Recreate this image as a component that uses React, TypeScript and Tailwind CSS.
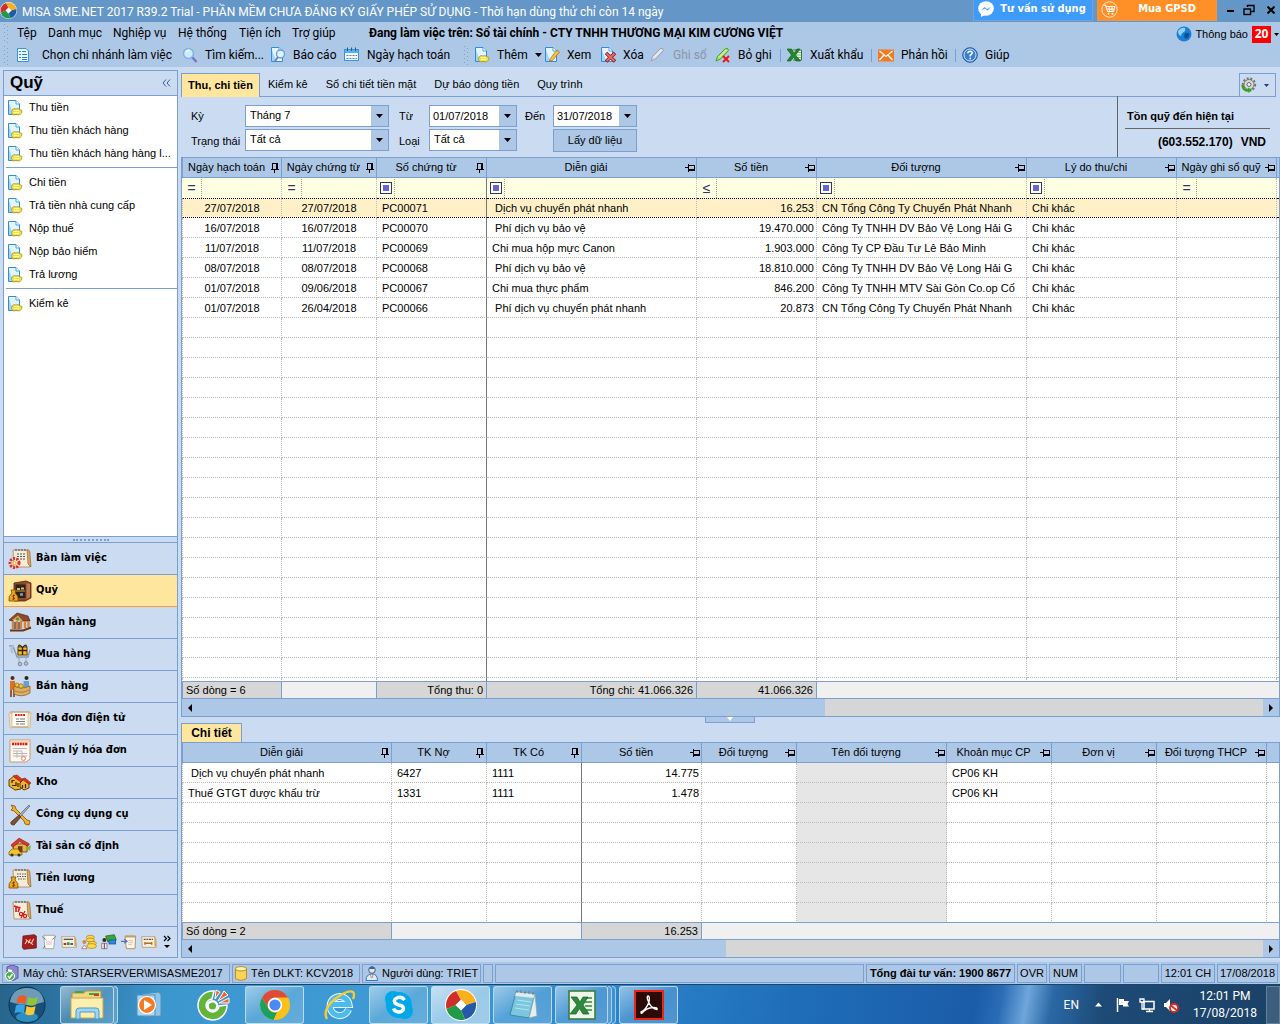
import type { ReactNode } from 'react'
import clsx from 'clsx'

/* ---------- small shared icons ---------- */

const MisaLogo = ({ size }: { size: number }) => (
    <svg width={size} height={size} viewBox="0 0 32 32" className="shrink-0">
        <circle cx="16" cy="16" r="16" fill="#fff" />
        <path d="M11 2 A15 15 0 0 1 30.800 13 L21 16 L16 11 Z" fill="#f9b01c" />
        <path d="M30.800 13 A15 15 0 0 1 20 30.500 L16 21 L21 16 Z" fill="#2458a8" />
        <path d="M20 30.500 A15 15 0 0 1 1.500 20 L11 16 L16 21 Z" fill="#1f9a45" />
        <path d="M1.500 20 A15 15 0 0 1 11 2 L16 11 L11 16 Z" fill="#cf2f2a" />
        <path d="M16 10.500 L21.500 16 L16 21.500 L10.500 16 Z" fill="#fff" />
    </svg>
)

const DocBase = ({ children }: { children?: ReactNode }) => (
    <svg width="16" height="16" viewBox="0 0 16 16" className="shrink-0">
        <path d="M1.500 .5 H9 L12.500 4 V14.500 H1.500 Z" fill="#e2f4ff" stroke="#2f8fd6" />
        <path d="M9 .5 V4 H12.500" fill="#fff" stroke="#2f8fd6" strokeWidth=".8" />
        <path d="M2 3 L6 14 H2 Z" fill="#9fd3f7" />
        {children}
    </svg>
)

const AddDocIcon = () => (
    <DocBase>
        <path d="M5 10 L7 8.500 L9 9 L11 8.500 L12.500 9.500 L15 10.500 L14.500 13 L12.500 15 L9 14.500 L6 15 L4.500 12.500 Z" fill="#f3e04a" stroke="#a89a1c" strokeWidth=".8" />
        <path d="M7 10.500 H12 M7 12.500 H12" stroke="#fff9b0" />
    </DocBase>
)

const ViewIcon = () => (
    <DocBase>
        <path d="M6 12 L13 3 L15.500 5 L8.500 13.500 L5.500 14 Z" fill="#f9c23c" stroke="#a0690e" strokeWidth=".7" />
    </DocBase>
)

const DeleteIcon = () => (
    <DocBase>
        <path d="M6 6 L15 14.500 M15 6 L6 14.500" stroke="#8e1c1c" strokeWidth="3.600" />
        <path d="M6.500 6.500 L14.500 14 M14.500 6.500 L6.500 14" stroke="#e46a64" strokeWidth="2" />
    </DocBase>
)

const ReportIcon = () => (
    <DocBase>
        <circle cx="10.500" cy="7" r="4" fill="#dff2ff" stroke="#6d9fd4" strokeWidth="1.400" />
        <path d="M8 10 L5 14" stroke="#7f77c4" strokeWidth="2" />
    </DocBase>
)

const ListIcon = () => (
    <svg width="16" height="16" viewBox="0 0 16 16" className="shrink-0">
        <path d="M1.500 1.500 H10 L12.500 4 V14.500 H1.500 Z" fill="#e9f6ff" stroke="#3b93d8" />
        <path d="M3 4.500 H5 M3 7.500 H5 M3 10.500 H5 M6 4.500 H10 M6 7.500 H11 M6 10.500 H11 M6 12.500 H11" stroke="#2f83c9" />
    </svg>
)

const SearchIcon = () => (
    <svg width="16" height="16" viewBox="0 0 16 16" className="shrink-0">
        <circle cx="6.500" cy="6.500" r="5" fill="#cfeaff" stroke="#7fb2e2" strokeWidth="1.500" />
        <path d="M4 5 Q5 3 7.500 3.500" stroke="#fff" strokeWidth="1.300" fill="none" />
        <path d="M10.500 10.500 L14.500 15" stroke="#7a74c6" strokeWidth="2.400" />
    </svg>
)

const CalendarIcon = () => (
    <svg width="16" height="16" viewBox="0 0 16 16" className="shrink-0">
        <rect x=".5" y="2.500" width="14" height="11" fill="#f2faff" stroke="#3b93d8" />
        <rect x="1" y="3" width="13" height="3" fill="#58b1ee" />
        <path d="M3.500 .5 V4 M7.500 .5 V4 M11.500 .5 V4" stroke="#24598c" />
        <path d="M2.500 8.500 H13 M2.500 11.500 H13" stroke="#4b88bd" strokeDasharray="2 1" />
    </svg>
)

const PencilIcon = ({ active }: { active?: boolean }) => (
    <svg width="16" height="16" viewBox="0 0 16 16" className="shrink-0">
        <path
            d="M1 14 L2.500 9.500 L10.500 1.500 Q13 .5 13.500 3.500 L5.500 12 Z"
            fill={active ? '#a6e36a' : '#d8dbe0'}
            stroke={active ? '#4f9e1e' : '#9aa2ad'}
        />
        <path d="M4 10.500 L11.500 3" stroke="#fff" strokeWidth=".8" />
        {active && <path d="M8 9 L14 15 M14 9 L8 15" stroke="#ee1111" strokeWidth="1.800" />}
    </svg>
)

const ExcelIcon = () => (
    <svg width="16" height="16" viewBox="0 0 16 16" className="shrink-0">
        <path d="M6 3 H14.500 V13 H6" fill="#e8f5e6" stroke="#2f7d32" />
        <path d="M9 5.500 H14 M9 8 H14 M9 10.500 H14" stroke="#7dbb7d" />
        <path d="M0 2 H4.500 L7 6 L10 2 H13 L8.500 8 L13.500 14 H9 L6.500 10.500 L3.500 14 H0 L4.500 8 Z" fill="#1f8a2d" stroke="#0d5218" strokeWidth=".6" />
    </svg>
)

const MailIcon = () => (
    <svg width="16" height="16" viewBox="0 0 16 16" className="shrink-0">
        <rect y="2.500" width="16" height="12" fill="#f47a20" />
        <path d="M1.500 4 L8 9.500 L14.500 4 M1.500 13 L6 8 M14.500 13 L10 8" stroke="#fff" strokeWidth="1.300" fill="none" />
    </svg>
)

const HelpIcon = () => (
    <svg width="16" height="16" viewBox="0 0 16 16" className="shrink-0">
        <circle cx="8" cy="8" r="7.300" fill="#3a80d2" stroke="#1f5aa5" />
        <circle cx="8" cy="8" r="6" fill="none" stroke="#cfe3fa" />
        <path d="M5.800 6.300 Q6 4.200 8.100 4.200 Q10.300 4.300 10.200 6.200 Q10 7.400 8.200 8.200 V9.500 M8.200 10.700 V12.200" stroke="#fff" strokeWidth="1.500" fill="none" />
    </svg>
)

const GlobeIcon = () => (
    <svg width="16" height="16" viewBox="0 0 16 16" className="shrink-0">
        <circle cx="8" cy="8" r="7.500" fill="#1c7fd6" />
        <path d="M2 5 Q5 1 9 2 Q10 5 7 6.500 Q5 7 5 10 Q2 9 2 5Z" fill="#8fd2ff" />
        <path d="M9 7 Q12 6 13.500 8 Q13 12 10 13 Q7 11 9 7Z" fill="#0b4f9c" />
    </svg>
)

const GearIcon = () => (
    <svg width="16" height="16" viewBox="0 0 16 16">
        <circle cx="8" cy="7.500" r="6" fill="none" stroke="#777" strokeWidth="2.400" strokeDasharray="2 1.600" />
        <circle cx="8" cy="7.500" r="5" fill="#d9d9d9" stroke="#777" />
        <circle cx="8" cy="7.500" r="2" fill="#f5f5f5" stroke="#666" />
        <path d="M1.500 8 Q2 14 8 13.500" stroke="#2fa51e" strokeWidth="2.400" fill="none" />
        <path d="M7 10.500 L11 13 L7.500 16 Z" fill="#2fa51e" />
    </svg>
)

const Caret = () => (
    <svg width="7" height="4" viewBox="0 0 7 4" className="shrink-0">
        <path d="M0 0 H7 L3.500 4 Z" fill="currentColor" />
    </svg>
)

/* Column pin: upright when the column is frozen, on its side otherwise */
const Pin = ({ fixed }: { fixed?: boolean }) => (
    <svg width="10" height="10" viewBox="0 0 10 10" className="mr-px shrink-0" shapeRendering="crispEdges">
        <g transform={fixed ? undefined : 'rotate(90 5 5)'}>
            <path d="M2.500 6 V.5 H6.500 V6 M1 6.500 H9 M4.500 7 V10" stroke="#000" fill="none" />
            <path d="M6 .5 H7.500 V6" stroke="#000" fill="none" />
        </g>
    </svg>
)

/* ---------- navigation pictures ---------- */

const Scroll = ({ children }: { children?: ReactNode }) => (
    <>
        <path d="M5 3 H20 L22 20 H6 Z" fill="#f4ecd8" stroke="#a98252" strokeWidth=".8" />
        <path d="M19 3 Q22 2 22 7 L23 20 L20 17 Z" fill="#d9a35c" stroke="#8a5f2c" strokeWidth=".6" />
        <path d="M8 4 V2 M11 4 V2 M14 4 V2 M17 4 V2" stroke="#444" />
        {children}
    </>
)

const MoneyBag = ({ x, y }: { x: number; y: number }) => (
    <g transform={`translate(${x} ${y})`}>
        <path d="M3 3 L2 0 H7 L6 3 Q10 6 9 11 H0 Q-1 6 3 3Z" fill="#f2a71b" stroke="#7a4a08" strokeWidth=".8" />
        <path d="M6 5.500 H4 Q3 6.500 4.500 7.200 Q6.500 8 5.500 9 H3 M4.500 4.500 V10" stroke="#5c3200" strokeWidth=".7" fill="none" />
    </g>
)

const House = ({ x, y, s = 1 }: { x: number; y: number; s?: number }) => (
    <g transform={`translate(${x} ${y}) scale(${s})`}>
        <path d="M2 6 H14 V13 H2 Z" fill="#eeb04c" stroke="#7d4a12" strokeWidth=".8" />
        <path d="M0 7 L7 1 L16 6 L14.500 8 L7.500 4 L1.500 9 Z" fill="#dc3b22" stroke="#8e1a0c" strokeWidth=".6" />
        <rect x="6" y="8" width="4" height="5" fill="#6b3d12" />
    </g>
)

const navArt: Record<string, ReactNode> = {
    desk: (
        <Scroll>
            <path d="M9 7 H18 M9 9.500 H17 M9 12 H18" stroke="#555" strokeDasharray="2 1" />
            <circle cx="6.500" cy="16" r="4.500" fill="none" stroke="#e12d1c" strokeWidth="3" strokeDasharray="2 1.200" />
            <circle cx="6.500" cy="16" r="2" fill="#ffb21c" />
            <circle cx="6.500" cy="16" r=".9" fill="#fff" />
        </Scroll>
    ),
    fund: (
        <>
            <path d="M6 4 L18 2 L23 4 V19 L17 22 H6 Z" fill="#8d4a2b" stroke="#4f2512" strokeWidth=".8" />
            <rect x="7.500" y="5.500" width="10" height="13.500" fill="#2d211b" />
            <path d="M18.500 4 L22 5 V18 L18.500 20 Z" fill="#c07650" />
            <path d="M8 12 H17" stroke="#c0a060" />
            <path d="M9 10 H12 M13 9.500 H16" stroke="#d9bd5a" strokeWidth="2" />
            <path d="M12 15.500 H15" stroke="#8f9aa0" strokeWidth="2.500" />
            <MoneyBag x={1} y={11} />
        </>
    ),
    bank: (
        <>
            <path d="M1 9 L9 2 L20 5 L22 10 H14 L10 5.500 L4 10 Z" fill="#8d4a2b" stroke="#4f2512" strokeWidth=".7" />
            <path d="M4 9 L10 4.500 L15 10 Z" fill="#e2a04c" />
            <circle cx="9.500" cy="8" r="1.500" fill="#3a9b3a" />
            <path d="M5 10 V18 M9 10 V18 M13 10 V18 M17 10 V17 M20.500 10 V16" stroke="#d68340" strokeWidth="2.400" />
            <path d="M2 19.500 H15 L23 16.500" stroke="#6a3517" strokeWidth="2" fill="none" />
            <path d="M7 11 V18 M11 11 V18" stroke="#2a160b" />
        </>
    ),
    buy: (
        <>
            <path d="M1 3 H5 L9 14 H20 L22 7" fill="none" stroke="#8b9ab0" strokeWidth="1.500" />
            <path d="M8 11 H21 M9 15 L20 14 M11 15 V20 M18 14 V20" stroke="#97a6ba" />
            <path d="M5 3 Q2 7 5 10" stroke="#b5c2d4" strokeWidth="2.500" fill="none" />
            <rect x="10" y="4" width="9" height="8" fill="#f7bd20" stroke="#6b4400" />
            <path d="M14.500 4 V12 M10 7.500 H19" stroke="#35240a" strokeWidth="1.400" />
            <path d="M14 4 Q10 0 11 4 M15 4 Q19 0 18 4" stroke="#35240a" strokeWidth="1.200" fill="none" />
            <circle cx="12" cy="21" r="1.800" fill="#b5c0ce" stroke="#7d8a9c" />
            <circle cx="18" cy="20.500" r="1.800" fill="#b5c0ce" stroke="#7d8a9c" />
        </>
    ),
    sell: (
        <>
            <circle cx="4.500" cy="3" r="2" fill="#5a2b12" />
            <path d="M2 6 H7 V15 H2 Z" fill="#e2701c" />
            <path d="M3 15 V22 M6 15 V22" stroke="#7a3510" strokeWidth="1.500" />
            <circle cx="18.500" cy="3" r="2" fill="#32231a" />
            <path d="M15.500 6 H21 V13 H15.500 Z" fill="#6d9fce" />
            <path d="M6 11 Q13 15 22 11 V18 Q14 23 6 19 Z" fill="#dcae63" stroke="#8a6428" strokeWidth=".8" />
            <circle cx="9" cy="10" r="2" fill="#f7c52c" stroke="#7d5506" strokeWidth=".6" />
            <circle cx="13" cy="11" r="2.200" fill="#f7c52c" stroke="#7d5506" strokeWidth=".6" />
            <path d="M7 16 Q14 19 21 15" stroke="#a87c36" fill="none" />
        </>
    ),
    einvoice: (
        <>
            <path d="M3 5 H21 V20 H3 Z" fill="#fffdf8" stroke="#cda978" strokeWidth="1.500" />
            <path d="M1 6 H4 V21 H2 Z M20 6 H23 L22 21 H20 Z" fill="#f2e1c4" stroke="#cda978" strokeWidth=".6" />
            <path d="M7 8 H17" stroke="#e02020" strokeWidth="1.800" strokeDasharray="2 .7" />
            <path d="M8 12 H11 M12 12 H17 M8 14.500 H17 M8 17 H11 M12 17 H17" stroke="#777" />
        </>
    ),
    invoice: (
        <>
            <path d="M2 1 H22 V20 L18 23 H2 Z" fill="#fffaf2" stroke="#c89a68" />
            <rect x="2.500" y="1.500" width="19" height="2.500" fill="#f3d9b4" />
            <path d="M4 5 H20" stroke="#e01818" strokeWidth="2.600" strokeDasharray="2 .6" />
            <path d="M5 9.500 H19 M5 12 H14 M5 14.500 H19 M5 17 H19 M9 12 V19 M14 12 V19" stroke="#bdb6b6" />
            <circle cx="15.500" cy="19.500" r="2" fill="none" stroke="#e58080" />
        </>
    ),
    stock: (
        <>
            <path d="M1 9 L6 5 L13 9 V18 L7 19 L1 15 Z" fill="#efb42c" stroke="#4a2f05" strokeWidth=".9" />
            <path d="M12 12 L16 8 L21 12 V17 L16 19 L12 16 Z" fill="#efb42c" stroke="#4a2f05" strokeWidth=".9" />
            <path d="M5 5 L9 4 L15 9 L13 11 L7 7 Z" fill="#dc2f1c" stroke="#8e1a0c" strokeWidth=".6" />
            <path d="M14 8 L17 7 L23 12 L21 13.500 L16 9.500 Z" fill="#dc2f1c" stroke="#8e1a0c" strokeWidth=".6" />
            <path d="M4 12 V9.500 H6.500 M4 14.500 H8 V11 M10 12 V16 M14.500 14 V17 M17.500 13 V17" stroke="#3b2503" strokeWidth="1.200" fill="none" />
        </>
    ),
    tools: (
        <>
            <path d="M3 2 L7 3 L8 6 L19 17 L22 18 L21 22 L17 21 L16 18 L6 8 L3 7 L5 5 Z" fill="#f3ae2a" stroke="#82520b" strokeWidth=".8" />
            <path d="M21 2 L22 3 L12 14 L10.500 12.500 Z" fill="#a9b1bb" stroke="#565e68" strokeWidth=".7" />
            <path d="M11 12 L13 14 L6 22 Q2 22 3 19 Z" fill="#7a5230" stroke="#40270f" strokeWidth=".7" />
        </>
    ),
    asset: (
        <>
            <House x={3} y={2} s={1.15} />
            <path d="M18 13 L23 10 L22 16 Z" fill="#6fbf3a" />
            <path d="M1 17 L4 14 H10 L12 17 L14 17.500 V20 H1 Z" fill="#f4c526" stroke="#7a5a06" strokeWidth=".7" />
            <circle cx="4" cy="20" r="1.600" fill="#333" />
            <circle cx="11" cy="20" r="1.600" fill="#333" />
        </>
    ),
    salary: (
        <Scroll>
            <path d="M9 7 H18 M9 9.500 H18 M10 12 H18" stroke="#555" strokeDasharray="1.500 1" />
            <MoneyBag x={1} y={10} />
        </Scroll>
    ),
    tax: (
        <Scroll>
            <path d="M6 7 L12 9 M8 7 V13 M12 8 L10 13" stroke="#e01818" strokeWidth="1.600" />
            <circle cx="13" cy="15" r="1.600" fill="none" stroke="#e01818" strokeWidth="1.200" />
            <circle cx="17" cy="17" r="1.600" fill="none" stroke="#e01818" strokeWidth="1.200" />
            <path d="M17 12 L13 19" stroke="#e01818" strokeWidth="1.300" />
        </Scroll>
    ),
    book: (
        <>
            <path d="M3 3 L20 1 L23 3 V21 L4 23 L2 20 Z" fill="#a81c1c" stroke="#5a0b0b" />
            <path d="M6 15 L9 10 M11 14 L14 8 M16 13 L19 7 M7 8 L18 16" stroke="#ffd9c4" strokeWidth="1.600" />
        </>
    ),
    ledger: (
        <>
            <path d="M4 2 H21 L19 22 H6 Z" fill="#fbfbf4" stroke="#8b8b7a" />
            <path d="M2 4 L8 9 M22 4 L16 9 M6 18 L3 22" stroke="#222" strokeDasharray="2 1" />
            <path d="M8 12 H17 M8 15 H17" stroke="#c66ac0" strokeDasharray="2 1" />
        </>
    ),
    chart: (
        <>
            <path d="M1 4 H21 L23 20 H2 Z" fill="#f8efdc" stroke="#b18a5c" />
            <path d="M20 4 L23 8 V20 L20 17 Z" fill="#d9a35c" />
            <path d="M4 8 H18" stroke="#555" strokeWidth="2" />
            <path d="M4 15 H8" stroke="#e02020" strokeWidth="3" />
            <path d="M9 14.500 H13" stroke="#2a9e2a" strokeWidth="4" />
            <path d="M14 15 H18" stroke="#2a60c8" strokeWidth="3" />
        </>
    ),
    coins: (
        <>
            <ellipse cx="14" cy="5" rx="6" ry="3" fill="#ffd84a" stroke="#a87808" />
            <ellipse cx="14" cy="9" rx="6" ry="3" fill="#ffd84a" stroke="#a87808" />
            <ellipse cx="17" cy="14" rx="6" ry="3" fill="#ffd84a" stroke="#a87808" />
            <ellipse cx="16" cy="18" rx="7" ry="3.500" fill="#ffd84a" stroke="#a87808" />
            <circle cx="5" cy="12" r="3" fill="#c98a5a" />
            <path d="M1 22 Q5 13 9 22 Z" fill="#fff" stroke="#b04a3a" />
        </>
    ),
    cash: (
        <>
            <path d="M7 3 L20 1 L23 9 L10 12 Z" fill="#3ba53b" stroke="#155a15" />
            <rect x="12" y="9" width="10" height="6" fill="#2d8ae0" stroke="#104a88" />
            <circle cx="5" cy="9" r="3" fill="#3b2a1c" />
            <path d="M1 22 V14 H9 V22 Z" fill="#e8eef6" stroke="#54657a" />
            <path d="M5 14 V22" stroke="#b02020" strokeWidth="1.500" />
        </>
    ),
    note: (
        <>
            <path d="M6 3 H22 L21 22 H8 Z" fill="#fdf6e6" stroke="#b18a5c" strokeWidth="1.400" />
            <path d="M6 4 H21" stroke="#c99a5c" strokeWidth="2.400" />
            <path d="M11 10 H18 M11 13 H18 M11 16 H16" stroke="#b9aa92" />
            <path d="M0 11 H8 M5 8 L9 11 L5 14" stroke="#5b6fb5" strokeWidth="2" fill="none" />
        </>
    ),
    link: (
        <>
            <path d="M1 4 H21 L23 20 H2 Z" fill="#f8efdc" stroke="#b18a5c" />
            <path d="M20 4 L23 8 V20 L20 17 Z" fill="#d9a35c" />
            <path d="M4 8 H18" stroke="#555" strokeWidth="2" strokeDasharray="3 1" />
            <path d="M5 14 H17 M6 12 V16 M16 12 V16" stroke="#a8702a" strokeWidth="2.200" />
        </>
    ),
}

const NavArt = ({ name, size = 24 }: { name: string; size?: number }) => (
    <svg width={size} height={size} viewBox="0 0 24 24" className="shrink-0">
        {navArt[name]}
    </svg>
)

/* ---------- data ---------- */

const menus = [
    { label: 'Tệp', width: 'w-[31px]' },
    { label: 'Danh mục', width: 'w-[65px]' },
    { label: 'Nghiệp vụ', width: 'w-[65px]' },
    { label: 'Hệ thống', width: 'w-[61px]' },
    { label: 'Tiện ích', width: 'w-[53px]' },
    { label: 'Trợ giúp', width: 'w-[77px]' },
]

const taskGroups = [
    ['Thu tiền', 'Thu tiền khách hàng', 'Thu tiền khách hàng hàng l...'],
    ['Chi tiền', 'Trả tiền nhà cung cấp', 'Nộp thuế', 'Nộp bảo hiểm', 'Trả lương'],
    ['Kiểm kê'],
]

const modules = [
    { art: 'desk', label: 'Bàn làm việc' },
    { art: 'fund', label: 'Quỹ', active: true },
    { art: 'bank', label: 'Ngân hàng' },
    { art: 'buy', label: 'Mua hàng' },
    { art: 'sell', label: 'Bán hàng' },
    { art: 'einvoice', label: 'Hóa đơn điện tử' },
    { art: 'invoice', label: 'Quản lý hóa đơn' },
    { art: 'stock', label: 'Kho' },
    { art: 'tools', label: 'Công cụ dụng cụ' },
    { art: 'asset', label: 'Tài sản cố định' },
    { art: 'salary', label: 'Tiền lương' },
    { art: 'tax', label: 'Thuế' },
]

const tabs = ['Thu, chi tiền', 'Kiểm kê', 'Sổ chi tiết tiền mặt', 'Dự báo dòng tiền', 'Quy trình']

type Column = {
    label: string
    width: string
    fixed?: boolean
    split?: boolean
    align?: string
    op?: string
    muted?: boolean
}

const voucherColumns: Column[] = [
    { label: 'Ngày hạch toán', width: 'w-[100px]', fixed: true, align: 'text-center', op: '=' },
    { label: 'Ngày chứng từ', width: 'w-[95px]', fixed: true, align: 'text-center', op: '=' },
    { label: 'Số chứng từ', width: 'w-[110px]', fixed: true, split: true, op: 'box' },
    { label: 'Diễn giải', width: 'w-[210px]', op: 'box' },
    { label: 'Số tiền', width: 'w-[120px]', align: 'text-right', op: '≤' },
    { label: 'Đối tượng', width: 'w-[210px]', op: 'box' },
    { label: 'Lý do thu/chi', width: 'w-[150px]', op: 'box' },
    { label: 'Ngày ghi sổ quỹ', width: 'w-[100px]', op: '=' },
]

const vouchers = [
    ['27/07/2018', '27/07/2018', 'PC00071', ' Dịch vụ chuyển phát nhanh', '16.253', 'CN Tổng Công Ty Chuyển Phát Nhanh', 'Chi khác', ''],
    ['16/07/2018', '16/07/2018', 'PC00070', ' Phí dịch vụ bảo vệ', '19.470.000', 'Công Ty TNHH DV Bảo Vệ Long Hải G', 'Chi khác', ''],
    ['11/07/2018', '11/07/2018', 'PC00069', 'Chi mua hộp mực Canon', '1.903.000', 'Công Ty CP Đầu Tư Lê Bảo Minh', 'Chi khác', ''],
    ['08/07/2018', '08/07/2018', 'PC00068', ' Phí dịch vụ bảo vệ', '18.810.000', 'Công Ty TNHH DV Bảo Vệ Long Hải G', 'Chi khác', ''],
    ['01/07/2018', '09/06/2018', 'PC00067', 'Chi mua thực phẩm', '846.200', 'Công Ty TNHH MTV Sài Gòn Co.op Cố', 'Chi khác', ''],
    ['01/07/2018', '26/04/2018', 'PC00066', ' Phí dịch vụ chuyển phát nhanh', '20.873', 'CN Tổng Công Ty Chuyển Phát Nhanh', 'Chi khác', ''],
]

const detailColumns: Column[] = [
    { label: 'Diễn giải', width: 'w-[210px]', fixed: true },
    { label: 'TK Nợ', width: 'w-[95px]', fixed: true },
    { label: 'TK Có', width: 'w-[95px]', fixed: true, split: true },
    { label: 'Số tiền', width: 'w-[120px]', align: 'text-right' },
    { label: 'Đối tượng', width: 'w-[95px]' },
    { label: 'Tên đối tượng', width: 'w-[150px]', muted: true },
    { label: 'Khoản mục CP', width: 'w-[105px]' },
    { label: 'Đơn vị', width: 'w-[105px]' },
    { label: 'Đối tượng THCP', width: 'w-[110px]' },
]

const details = [
    [' Dịch vụ chuyển phát nhanh', '6427', '1111', '14.775', '', '', 'CP06 KH', '', ''],
    ['Thuế GTGT được khấu trừ', '1331', '1111', '1.478', '', '', 'CP06 KH', '', ''],
]

/* ---------- building blocks ---------- */

const Grip = () => (
    <svg width="6" height="20" className="shrink-0">
        <path d="M1.500 1 V20 M4.500 3 V20" stroke="#86a0c4" strokeDasharray="1 3" />
    </svg>
)

const ToolButton = ({ icon, label, width, wide, disabled, caret }: {
    icon: ReactNode
    label: string
    width: string
    wide?: boolean
    disabled?: boolean
    caret?: boolean
}) => (
    <button disabled={disabled} className={clsx('flex items-center whitespace-nowrap', width, wide ? 'gap-[10px]' : 'gap-[7px]', disabled && 'text-[#8a95a5]')}>
        {icon}
        <span>{label}</span>
        {caret && <Caret />}
    </button>
)

const Separator = () => <span className="mr-[6px] h-[13px] w-px shrink-0 bg-[#7aa0d0]" />

const Combo = ({ id, value, width }: { id: string; value: string; width: string }) => (
    <div className={clsx('flex h-[22px] border border-[#7ba0cf] bg-white', width)}>
        <select id={id} className="min-w-0 flex-1 appearance-none bg-white px-1 pb-0.5 outline-none">
            <option>{value}</option>
        </select>
        <span className="flex w-[17px] items-center justify-center bg-[#adc7e6]">
            <Caret />
        </span>
    </div>
)

const DateBox = ({ id, value, width }: { id: string; value: string; width: string }) => (
    <div className={clsx('flex h-[22px] border border-[#7ba0cf] bg-white', width)}>
        <input id={id} defaultValue={value} className="min-w-0 flex-1 bg-white px-[3px] outline-none" />
        <button type="button" aria-label="Chọn ngày" className="flex w-[17px] items-center justify-center bg-[#adc7e6]">
            <Caret />
        </button>
    </div>
)

const Operator = ({ op }: { op: string }) => (
    <div className={clsx('flex h-[19px] items-center border-r border-dotted border-[#999]', op === 'box' ? 'w-[18px] pl-[3px]' : 'w-5 justify-center')}>
        {op === 'box' ? (
            <span className="flex size-3 items-center justify-center border border-[#33336b] bg-white">
                <span className="size-[6px] bg-[#6666cc]" />
            </span>
        ) : (
            <span className="text-sm leading-none text-[#33336b]">{op}</span>
        )}
    </div>
)

const DataTable = ({ columns, rows, blank, filter, selected }: {
    columns: Column[]
    rows: string[][]
    blank: number
    filter?: boolean
    selected?: number
}) => (
    <table className="w-full table-fixed border-separate border-spacing-0">
        <thead>
            <tr>
                {columns.map((c) => (
                    <th key={c.label} className={clsx('h-5 border-r border-b border-[#7ba0cf] bg-[#adc7e6] p-0 font-normal first:border-l', c.width)}>
                        <div className="flex items-center">
                            <span className="flex-1 whitespace-nowrap text-center">{c.label}</span>
                            <Pin fixed={c.fixed} />
                        </div>
                    </th>
                ))}
                <th className="border-b border-[#7ba0cf] bg-[#adc7e6] p-0" />
            </tr>
        </thead>
        <tbody>
            {filter && (
                <tr className="bg-[#ffffe1]">
                    {columns.map((c) => (
                        <td key={c.label} className={clsx('h-5 border-r p-0', c.split ? 'border-[#777]' : 'border-dotted border-[#bbb]')}>
                            <Operator op={c.op ?? '='} />
                        </td>
                    ))}
                    <td />
                </tr>
            )}
            {rows.map((row, r) => (
                <tr key={r} className={r === selected ? 'bg-[#fff0c8]' : 'bg-white'}>
                    {row.map((cell, i) => (
                        <td
                            key={i}
                            className={clsx(
                                'h-5 overflow-hidden border-b whitespace-pre first:border-l first:border-l-[#bbb]',
                                columns[i].align === 'text-center' ? 'text-center' : columns[i].align === 'text-right' ? 'pr-0.5 text-right' : 'pl-[5px]',
                                columns[i].split ? 'border-r border-r-[#777] [border-style:dotted_solid_dotted_dotted]' : 'border-r border-dotted border-r-[#bbb]',
                                columns[i].muted && 'bg-[#e6e6e6]',
                                r === selected ? 'border-t border-t-black border-b-black' : 'border-b-[#bbb] pt-0.5',
                            )}
                        >
                            {cell}
                        </td>
                    ))}
                    <td className={clsx('border-b border-dotted', r === selected ? 'border-t border-black' : 'border-[#bbb]')} />
                </tr>
            ))}
            {Array.from({ length: blank }, (_, r) => (
                <tr key={r}>
                    {columns.map((c) => (
                        <td
                            key={c.label}
                            className={clsx(
                                'h-5 border-b border-b-[#bbb] p-0 first:border-l first:border-l-[#bbb]',
                                c.split ? 'border-r border-r-[#777] [border-style:dotted_solid_dotted_dotted]' : 'border-r border-dotted border-r-[#bbb]',
                                c.muted && 'bg-[#e6e6e6]',
                            )}
                        />
                    ))}
                    <td className="border-b border-dotted border-[#bbb] p-0" />
                </tr>
            ))}
        </tbody>
    </table>
)

const Sum = ({ width, children, empty, left }: { width: string; children?: ReactNode; empty?: boolean; left?: boolean }) => (
    <div className={clsx('shrink-0 border-r border-[#7ba0cf] px-[3px]', width, empty ? 'bg-[#f0f0f0]' : 'bg-[#d6d6d6]', left ? 'text-left' : 'text-right')}>
        {children}
    </div>
)

const ScrollBar = ({ thumb }: { thumb: string }) => (
    <div className="flex h-[18px] shrink-0 border-t border-[#7ba0cf] bg-[#d6d6d6]">
        <button aria-label="Cuộn trái" className="flex w-4 items-center justify-center bg-[#adc7e6]">
            <svg width="4" height="8"><path d="M4 0 V8 L0 4 Z" /></svg>
        </button>
        <div className={clsx('bg-[#adc7e6]', thumb)} />
        <button aria-label="Cuộn phải" className="ml-auto flex w-4 items-center justify-center bg-[#adc7e6]">
            <svg width="4" height="8"><path d="M0 0 V8 L4 4 Z" /></svg>
        </button>
    </div>
)

const StatusCell = ({ width, children }: { width: string; children?: ReactNode }) => (
    <div className={clsx('flex h-[19px] items-center gap-1 border border-[#7ba0cf] whitespace-nowrap', width)}>
        {children}
    </div>
)

/* ---------- page parts ---------- */

const TitleBar = () => (
    <header className="flex h-[22px] shrink-0 bg-[#6496c8] text-white">
        <div className="flex items-center pb-0.5">
            <MisaLogo size={17} />
        </div>
        <h1 className="ml-[5px] mt-px whitespace-nowrap font-[Roboto,sans-serif] text-[12px] leading-[22px]">
            MISA SME.NET 2017 R39.2 Trial - PHẦN MỀM CHƯA ĐĂNG KÝ GIẤY PHÉP SỬ DỤNG - Thời hạn dùng thử chỉ còn 14 ngày
        </h1>
        <div className="ml-auto flex shrink-0 items-start gap-1 font-['DejaVu_Sans_Condensed','DejaVu_Sans',sans-serif] text-[11px] font-bold">
            <button className="flex h-[21px] w-[120px] items-center border border-t-0 border-[#7ba0cf] bg-[#3d9bfc] pb-0.5 pl-1">
                <svg width="16" height="16" viewBox="0 0 16 16">
                    <ellipse cx="8" cy="7.500" rx="7.800" ry="7.300" fill="#fff" />
                    <path d="M3 12 V16 L7 14 Z" fill="#fff" />
                    <path d="M3 9.500 L6.500 6 L9 8 L13 6 L9.500 9.500 L7 7.600 Z" fill="#3d9bfc" />
                </svg>
                <span className="flex-1 whitespace-nowrap">Tư vấn sử dụng</span>
            </button>
            <button className="flex h-[21px] w-[120px] items-center border border-t-0 border-[#e39a50] bg-[#ff8f26] pb-0.5 pl-[3px]">
                <svg width="17" height="17" viewBox="0 0 17 17">
                    <circle cx="8.500" cy="8.500" r="7.700" fill="none" stroke="#fff" strokeWidth=".8" />
                    <path d="M2.500 4 H4.500 L6.500 10.500 H12.500 L14 5.500 H5 M6 8 H13.500 M8 5.500 L8.500 10.500 M11 5.500 V10.500" stroke="#fff" fill="none" />
                    <circle cx="7.500" cy="12.700" r="1" fill="#fff" />
                    <circle cx="11.500" cy="12.700" r="1" fill="#fff" />
                </svg>
                <span className="flex-1">Mua GPSD</span>
            </button>
            <div className="flex h-5 items-center gap-2 pr-[5px] pl-1">
                <button aria-label="Thu nhỏ">
                    <svg width="10" height="12"><path d="M2 7 H9" stroke="#000" strokeWidth="2" /></svg>
                </button>
                <button aria-label="Khôi phục">
                    <svg width="12" height="12" fill="none" stroke="#000">
                        <path d="M4.500 3 V1.500 H11 V7.500 H8" strokeWidth="1.400" />
                        <rect x="1" y="5" width="6.500" height="5.500" strokeWidth="1.400" />
                    </svg>
                </button>
                <button aria-label="Đóng" className="ml-1">
                    <svg width="8" height="8"><path d="M.5 .5 L7.500 7.500 M7.500 .5 L.5 7.500" stroke="#000" strokeWidth="2" /></svg>
                </button>
            </div>
        </div>
    </header>
)

const MenuBars = () => (
    <nav className="flex h-[45px] shrink-0 flex-col bg-[#adc7e6] font-[Roboto,sans-serif] text-[12px]">
        <div className="flex h-[22px] items-center pl-[3px]">
            <Grip />
            <div className="ml-2 flex">
                {menus.map((m) => (
                    <button key={m.label} className={clsx('whitespace-nowrap text-left', m.width)}>{m.label}</button>
                ))}
            </div>
            <strong className="whitespace-nowrap">Đang làm việc trên: Sổ tài chính - CTY TNHH THƯƠNG MẠI KIM CƯƠNG VIỆT</strong>
            <button className="ml-auto flex items-center gap-[3px] pt-0.5 pr-px font-['Liberation_Sans',sans-serif] text-[11px]">
                <GlobeIcon />
                <span>Thông báo</span>
                <span className="ml-px flex h-[17px] w-[19px] items-center justify-center bg-[#f00] font-['Open_Sans',sans-serif] text-[12px] font-bold text-white">20</span>
                <svg width="5" height="3"><path d="M0 0 H5 L2.500 3 Z" /></svg>
            </button>
        </div>
        <div className="flex h-[22px] items-center pl-[3px]">
            <Grip />
            <div className="ml-[7px] flex items-center">
                <ToolButton icon={<ListIcon />} label="Chọn chi nhánh làm việc" width="w-[166px]" wide />
                <ToolButton icon={<SearchIcon />} label="Tìm kiếm..." width="w-[88px]" />
                <ToolButton icon={<ReportIcon />} label="Báo cáo" width="w-[74px]" />
                <ToolButton icon={<CalendarIcon />} label="Ngày hạch toán" width="w-[119px]" />
                <Grip />
                <span className="w-[5px]" />
                <ToolButton icon={<AddDocIcon />} label="Thêm" width="w-[70px]" caret />
                <ToolButton icon={<ViewIcon />} label="Xem" width="w-[56px]" />
                <ToolButton icon={<DeleteIcon />} label="Xóa" width="w-[50px]" />
                <ToolButton icon={<PencilIcon />} label="Ghi sổ" width="w-[65px]" disabled />
                <ToolButton icon={<PencilIcon active />} label="Bỏ ghi" width="w-[65px]" />
                <Separator />
                <ToolButton icon={<ExcelIcon />} label="Xuất khẩu" width="w-[84px]" />
                <Separator />
                <ToolButton icon={<MailIcon />} label="Phản hồi" width="w-[77px]" />
                <Separator />
                <ToolButton icon={<HelpIcon />} label="Giúp" width="w-[50px]" />
            </div>
        </div>
    </nav>
)

const Sidebar = () => (
    <aside className="flex w-[175px] shrink-0 flex-col border border-[#7ba0cf]">
        <div className="flex h-[25px] shrink-0 items-center justify-between border-b border-[#7ba0cf] px-1.5">
            <h2 className="text-[17px] font-bold">Quỹ</h2>
            <button aria-label="Thu gọn">
                <svg width="9" height="8" fill="none" stroke="#3a5f9e"><path d="M4 .5 L1 4 L4 7.500 M8 .5 L5 4 L8 7.500" /></svg>
            </button>
        </div>
        <div className="min-h-0 flex-1 overflow-hidden bg-white">
            {taskGroups.map((group, g) => (
                <ul key={g} className={clsx(g > 0 && 'mt-0.5 ml-0.5 border-t border-[#7ba0cf] pt-[3px]')}>
                    {group.map((task) => (
                        <li key={task}>
                            <a href="#" className={clsx('flex h-[23px] items-center gap-1.5 whitespace-nowrap', g > 0 ? 'pl-px' : 'pl-[3px]')}>
                                <AddDocIcon />
                                {task}
                            </a>
                        </li>
                    ))}
                </ul>
            ))}
        </div>
        <div className="flex h-[6px] shrink-0 items-center justify-center border-t border-[#7ba0cf]">
            <span className="w-9 border-t-2 border-dotted border-[#7ba0cf]" />
        </div>
        <div className="shrink-0 border-t border-[#7ba0cf] font-['DejaVu_Sans_Condensed','DejaVu_Sans',sans-serif] text-[11px] font-bold">
            {modules.map((m) => (
                <button
                    key={m.label}
                    className={clsx('flex h-8 w-full items-center gap-1 border-b pl-1', m.active ? 'border-[#ff9a3c] bg-[#ffe69f]' : 'border-[#7ba0cf]')}
                >
                    <NavArt name={m.art} />
                    {m.label}
                </button>
            ))}
        </div>
        <div className="flex h-[30px] shrink-0 items-center gap-1 pl-[17px]">
            {['book', 'ledger', 'chart', 'coins', 'cash', 'note', 'link'].map((name) => (
                <button key={name} aria-label={name}>
                    <NavArt name={name} size={16} />
                </button>
            ))}
            <button aria-label="Thêm mục" className="ml-0.5">
                <svg width="8" height="14" fill="none" stroke="#000">
                    <path d="M1 1 L3.500 3.500 L1 6 M4.500 1 L7 3.500 L4.500 6" strokeWidth="1.200" />
                    <path d="M1 10 H7 L4 13 Z" fill="#000" stroke="none" />
                </svg>
            </button>
        </div>
    </aside>
)

const FilterPanel = () => (
    <div className="flex h-[61px] shrink-0">
        <form className="grid auto-rows-[24px] grid-cols-[54px_154px_30px_96px_28px_84px] pt-[9px] pl-[10px]">
            <label htmlFor="period" className="leading-[22px]">Kỳ</label>
            <Combo id="period" value="Tháng 7" width="w-[144px]" />
            <label htmlFor="from" className="leading-[22px]">Từ</label>
            <DateBox id="from" value="01/07/2018" width="w-[88px]" />
            <label htmlFor="to" className="leading-[22px]">Đến</label>
            <DateBox id="to" value="31/07/2018" width="w-[84px]" />
            <label htmlFor="state" className="leading-6">Trạng thái</label>
            <Combo id="state" value="Tất cả" width="w-[144px]" />
            <label htmlFor="kind" className="leading-6">Loại</label>
            <Combo id="kind" value="Tất cả" width="w-[88px]" />
            <button type="button" className="col-start-6 h-[23px] border border-[#7ba0cf] bg-[#adc7e6]">Lấy dữ liệu</button>
        </form>
        <div className="ml-auto w-[163px] border-l border-[#666] pt-2 pr-[10px] pl-[7px] font-bold">
            <p className="border-b border-[#666] pl-0.5 leading-[24px]">Tồn quỹ đến hiện tại</p>
            <p className="flex justify-end gap-2 pr-1 text-[12px] leading-[26px]">
                <span>(603.552.170)</span>
                <span>VND</span>
            </p>
        </div>
    </div>
)

const MainArea = () => (
    <main className="flex min-w-0 flex-1 flex-col">
        <div className="mt-1.5 -mb-px flex h-[24px] shrink-0 items-stretch pr-1">
            {tabs.map((tab, i) => (
                <button
                    key={tab}
                    className={clsx('whitespace-nowrap', i === 0 ? 'w-[79px] border border-b-0 border-[#7ba0cf] bg-[#ffe69f] font-bold' : 'border-b border-[#7ba0cf] pr-[10px] pl-2')}
                >
                    {tab}
                </button>
            ))}
            <div className="flex-1 border-b border-[#7ba0cf]" />
            <button aria-label="Tùy chọn" className="flex w-[37px] items-center gap-[7px] border border-[#7ba0cf] pl-px text-[#1d3f8f]">
                <GearIcon />
                <svg width="5" height="3"><path d="M0 0 H5 L2.500 3 Z" fill="currentColor" /></svg>
            </button>
        </div>
        <FilterPanel />
        <section className="flex min-h-0 flex-1 flex-col border border-[#7ba0cf] bg-white">
            <div className="min-h-0 flex-1 overflow-hidden">
                <DataTable columns={voucherColumns} rows={vouchers} blank={19} filter selected={0} />
            </div>
            <div className="flex h-[17px] shrink-0 border-t border-l border-[#7ba0cf] bg-[#f0f0f0] leading-4">
                <Sum width="w-[99px]" left>Số dòng = 6</Sum>
                <Sum width="w-[95px]" empty />
                <Sum width="w-[110px]">Tổng thu: 0</Sum>
                <Sum width="w-[210px]">Tổng chi: 41.066.326</Sum>
                <Sum width="w-[120px]">41.066.326</Sum>
            </div>
            <ScrollBar thumb="w-[627px]" />
        </section>
        <div className="flex h-1.5 shrink-0 justify-center pr-0.5">
            <button aria-label="Ẩn chi tiết" className="flex w-[50px] justify-center border border-t-0 border-[#7ba0cf] bg-[#adc7e6]">
                <svg width="6" height="4"><path d="M0 0 H6 L3 4 Z" fill="#fff" /></svg>
            </button>
        </div>
        <div className="flex h-[19px] shrink-0">
            <button className="w-[61px] border border-b-0 border-[#7ba0cf] bg-[#ffe69f] text-[12px] leading-4 font-bold">Chi tiết</button>
        </div>
        <section className="flex shrink-0 flex-col border border-[#7ba0cf] bg-white">
            <div className="h-[179px] overflow-hidden">
                <DataTable columns={detailColumns} rows={details} blank={6} />
            </div>
            <div className="flex h-[17px] shrink-0 border-t border-l border-[#7ba0cf] bg-[#f0f0f0] leading-4">
                <Sum width="w-[209px]" left>Số dòng = 2</Sum>
                <Sum width="w-[190px]" empty />
                <Sum width="w-[120px]">16.253</Sum>
            </div>
            <ScrollBar thumb="w-[528px]" />
        </section>
    </main>
)

const StatusBar = () => (
    <footer className="flex h-6 shrink-0 items-center gap-[2px] border-t-2 border-[#c3d7f0] bg-[#adc7e6] px-0.5">
        <StatusCell width="w-[228px] pl-0.5">
            <svg width="14" height="16" viewBox="0 0 14 16" className="shrink-0">
                <path d="M2 2 L7 0 L13 2 V13 L7 16 L2 14 Z" fill="#8d86d0" stroke="#5d56a0" />
                <path d="M3 4 L7 5 V7 L3 6Z" fill="#fff" />
                <circle cx="5" cy="11" r="4.500" fill="#43b649" stroke="#fff" />
                <path d="M3 11 L4.500 13 L7.500 9" stroke="#fff" strokeWidth="1.500" fill="none" />
            </svg>
            Máy chủ: STARSERVER\MISASME2017
        </StatusCell>
        <StatusCell width="w-[128px] pl-0.5">
            <svg width="12" height="15" viewBox="0 0 12 15" className="shrink-0">
                <path d="M.5 2.500 V12.500 Q6 16 11.500 12.500 V2.500 Z" fill="#f8d35a" stroke="#c58f14" />
                <ellipse cx="6" cy="2.800" rx="5.500" ry="2.200" fill="#fff2b8" stroke="#c58f14" />
            </svg>
            Tên DLKT: KCV2018
        </StatusCell>
        <StatusCell width="w-[119px] pl-0.5">
            <svg width="13" height="15" viewBox="0 0 13 15" className="shrink-0">
                <circle cx="7" cy="4" r="3.300" fill="#fde3bd" stroke="#2b62ae" />
                <path d="M4 3 Q7 -2 10 3 Z" fill="#2b62ae" />
                <path d="M1 14.500 Q1 8 7 8 Q12.500 8 12.500 14.500 Z" fill="#d7e9fb" stroke="#2f7ac6" />
                <path d="M5 9 L7 12 L8 9" stroke="#f08a1c" fill="none" />
            </svg>
            Người dùng: TRIET
        </StatusCell>
        <StatusCell width="w-[10px]" />
        <StatusCell width="min-w-0 flex-1" />
        <StatusCell width="w-[149px] justify-center"><b>Tổng đài tư vấn: 1900 8677</b></StatusCell>
        <StatusCell width="w-[30px] justify-center">OVR</StatusCell>
        <StatusCell width="w-[33px] justify-center">NUM</StatusCell>
        <StatusCell width="w-[37px]" />
        <StatusCell width="w-[36px]" />
        <StatusCell width="w-[54px] justify-center">12:01 CH</StatusCell>
        <StatusCell width="w-[61px] justify-center">17/08/2018</StatusCell>
    </footer>
)

const TaskButton = ({ label, open, bright, width, children }: { label: string; open?: boolean; bright?: boolean; width: string; children: ReactNode }) => (
    <button
        aria-label={label}
        className={clsx(
            'flex h-[38px] items-center justify-center',
            width,
            open && 'rounded-[3px] border border-[#c9e4f5]/80 bg-linear-to-br from-white/50 via-white/15 to-white/20',
            bright && 'bg-white/40',
        )}
    >
        {children}
    </button>
)

const TaskBar = () => (
    <div className="flex h-10 shrink-0 items-center border-t border-[#1c4560] bg-[linear-gradient(100deg,#27648a_0%,#2d78a8_6%,#3d97cf_13%,#3f9bd6_35%,#2b84cc_48%,#1f6db9_62%,#1b5ca8_76%,#2a6cb6_78%,#6fa6da_80%,#2a68a6_82%,#1d4a76_86%,#1b4166_100%)]">
        <button aria-label="Start" className="mr-[13px] ml-[7px]">
            <svg width="40" height="38" viewBox="0 0 40 38">
                <circle cx="20" cy="19" r="18" fill="#174f76" stroke="#0c3552" />
                <path d="M3 16 Q5 2 20 2 Q35 2 37 16 Q20 22 3 16Z" fill="#8fb4cc" opacity=".75" />
                <ellipse cx="20" cy="31" rx="11" ry="5" fill="#37a9de" opacity=".7" />
                <path d="M11 11 Q15 8 19.500 10.500 L18.500 18 Q14 15.500 9.500 18 Z" fill="#ee5a24" />
                <path d="M21 11 Q25.500 13.500 31 11 L29 18.500 Q24.500 21 19.800 18.500 Z" fill="#8cc63f" />
                <path d="M9 19.500 Q13.500 17 18 19.500 L17 27.500 Q12 25 7.500 27.500 Z" fill="#35a5e5" />
                <path d="M19.500 20 Q24 22.500 28.600 20 L27 28 Q22.500 30.500 18.300 28 Z" fill="#fdc82f" />
            </svg>
        </button>
        <TaskButton label="Explorer" width="w-[54px]" open>
            <svg width="34" height="30" viewBox="0 0 34 30">
                <path d="M2 3 H14 L16 1 H31 V27 H2 Z" fill="#f1d77c" stroke="#b8943a" />
                <path d="M5 2 H13 M19 4 H29" stroke="#35a853" strokeWidth="2" />
                <path d="M24 5 H29" stroke="#d23b2b" strokeWidth="2" />
                <path d="M1 8 H33 V28 H1 Z" fill="#fbeeae" stroke="#c9a74e" />
                <path d="M6 29 V21 Q6 18 9 18 H26 Q29 18 29 21 V29 H25 V22 H10 V29 Z" fill="#9fd4f2" stroke="#4d9cc9" />
            </svg>
        </TaskButton>
        <span className="h-[38px] w-1 rounded-r border-y border-r border-[#c9e4f5]/80 bg-white/20" />
        <TaskButton label="Media Player" width="w-[46px] ml-2" >
            <svg width="28" height="28" viewBox="0 0 28 28">
                <path d="M7 3 L24 1 L26 4 V25 L9 26 Z" fill="#8fc4e6" stroke="#4d90bd" />
                <rect x="2" y="4" width="18" height="21" fill="#aed6f0" stroke="#4d90bd" />
                <circle cx="12" cy="14" r="8.500" fill="#f47b20" stroke="#fff" strokeWidth="1.200" />
                <path d="M9 9 L17 14 L9 19 Z" fill="#fff" />
            </svg>
        </TaskButton>
        <TaskButton label="Cốc Cốc" width="w-[64px] ml-[9px]">
            <svg width="34" height="34" viewBox="0 0 34 34">
                <path d="M18 3 A14.500 14.500 0 1 0 31 17 L23 18 A6.500 6.500 0 1 1 16 11 Z" fill="#62b53a" stroke="#fff" strokeWidth="1.500" />
                <circle cx="16.500" cy="18" r="6" fill="#fff" />
                <circle cx="16.500" cy="18" r="3.600" fill="#62b53a" />
                <path d="M19 11 L20 2 L24 4 Z M22 13 L28 3 L32 7 Z M23 15 L33 10 L33 15 Z" fill="#f4672a" stroke="#fff" />
            </svg>
        </TaskButton>
        <TaskButton label="Chrome" width="w-[59px] mr-1" open>
            <svg width="30" height="30" viewBox="0 0 30 30">
                <circle cx="15" cy="15" r="15" fill="#fbc116" />
                <path d="M2 7.500 A15 15 0 0 1 28 7.500 H15 A7.500 7.500 0 0 0 8.500 18.700 Z" fill="#de4a3c" />
                <path d="M2 7.500 L8.500 18.700 A7.500 7.500 0 0 0 17 22.200 L13.500 29.900 A15 15 0 0 1 2 7.500 Z" fill="#1ba15f" />
                <circle cx="15" cy="15" r="7.200" fill="#fff" />
                <circle cx="15" cy="15" r="5.600" fill="#4a8af4" />
            </svg>
        </TaskButton>
        <TaskButton label="Internet Explorer" width="w-[61px]">
            <svg width="32" height="32" viewBox="0 0 32 32">
                <path d="M25.500 20.500 A9.500 9.500 0 1 1 26 15.500 H9" fill="none" stroke="#eaf8ff" strokeWidth="7" />
                <path d="M25.500 20.500 A9.500 9.500 0 1 1 26 15.500 H9" fill="none" stroke="#4cbcf0" strokeWidth="5" />
                <path d="M4 30 Q-1 21 12 10 Q25 0 30 3 Q32 5 30 10" fill="none" stroke="#f8cc2e" strokeWidth="2.400" />
            </svg>
        </TaskButton>
        <TaskButton label="Skype" width="w-[59px] mr-[3px]" open>
            <svg width="30" height="30" viewBox="0 0 30 30">
                <circle cx="15" cy="15" r="13" fill="#00a8e8" />
                <circle cx="9" cy="9" r="8" fill="#00a8e8" />
                <circle cx="21" cy="21" r="8" fill="#00a8e8" />
                <path d="M20.500 10 Q18 6.500 14 7.500 Q9.500 9 10.500 12 Q11 14 15 15 Q20 16 19.500 19 Q18 22.500 14 22 Q10.500 21.500 9.500 18.500" fill="none" stroke="#fff" strokeWidth="3.400" />
            </svg>
        </TaskButton>
        <TaskButton label="MISA" width="w-[59px] mr-[3px]" open bright>
            <MisaLogo size={32} />
        </TaskButton>
        <TaskButton label="Notepad" width="w-[59px] mr-[3px]" open>
            <svg width="32" height="32" viewBox="0 0 32 32">
                <path d="M9 3 L28 5 L22 29 L3 26 Z" fill="#7cc7de" stroke="#3e8ba6" />
                <path d="M9 3 L28 5 L27 9 L8 7 Z" fill="#dfe9ee" />
                <path d="M10 11 L24 13 M9 15 L23 17 M8 19 L22 21" stroke="#b5e5f2" />
                <path d="M28 5 L30 27 L22 29 Z" fill="#e8eef0" stroke="#8fa3ab" strokeWidth=".7" />
                <path d="M10 4 V1 M14 4 V1 M18 5 V2 M22 5 V2 M26 6 V3" stroke="#777" />
            </svg>
        </TaskButton>
        <TaskButton label="Excel" width="w-[53px]" open>
            <svg width="28" height="30" viewBox="0 0 28 30">
                <rect x="1" y="1" width="26" height="28" fill="#eef6ec" stroke="#3c7d3e" strokeWidth="1.600" />
                <path d="M17 8 H24 M17 12 H24 M17 16 H24 M17 20 H24" stroke="#5fa562" strokeWidth="2" />
                <path d="M3 7 H9 L12 12 L15 7 H20 L15 15 L21 24 H15 L11.500 18.500 L8 24 H2 L9 15 Z" fill="#2c8a3a" stroke="#155c22" strokeWidth=".7" />
            </svg>
        </TaskButton>
        <span className="h-[38px] w-1 rounded-r border-y border-r border-[#c9e4f5]/70 bg-white/20" />
        <span className="mr-[3px] h-[38px] w-1 rounded-r border-y border-r border-[#c9e4f5]/70 bg-white/10" />
        <TaskButton label="Adobe Reader" width="w-[59px]" open>
            <svg width="30" height="30" viewBox="0 0 30 30">
                <rect x="1" y="1" width="28" height="28" fill="#2b0a08" stroke="#ee2312" strokeWidth="2" />
                <path d="M7 22 Q12 20 15 12 Q16 6 14 6 Q12 7 15 13 Q18 19 23 19.500 Q24 17.500 19 17.500 Q12 18 8 23 Q7 24 7 22Z" fill="none" stroke="#fff" strokeWidth="1.400" />
            </svg>
        </TaskButton>
        <div className="ml-auto flex items-center font-[Roboto,sans-serif] text-white">
            <span className="text-[12px]">EN</span>
            <svg width="8" height="5" className="ml-4"><path d="M0 4.500 H7 L3.500 .5 Z" fill="#fff" /></svg>
            <svg width="16" height="16" viewBox="0 0 16 16" className="ml-3">
                <path d="M2.500 1 V15" stroke="#fff" strokeWidth="1.500" />
                <path d="M4 2 H9 V4 H14 L12.500 7 L14 9.500 H8 V8 H4 Z" fill="#fff" />
            </svg>
            <svg width="16" height="16" viewBox="0 0 16 16" fill="none" stroke="#fff" className="ml-2">
                <rect x="5" y="4.500" width="10" height="7.500" strokeWidth="1.500" />
                <path d="M7 14.500 H14 M10.500 12 V14 M1 2 H5 V5 H1 Z M3 5 V12 H5" strokeWidth="1.300" />
            </svg>
            <svg width="16" height="16" viewBox="0 0 16 16" className="ml-2">
                <path d="M1 6 H3 L7 2 V14 L3 10 H1 Z" fill="#fff" />
                <circle cx="11" cy="11" r="4" fill="#fff" stroke="#e02a1c" strokeWidth="1.800" />
                <path d="M8 8.500 L14 13.500" stroke="#e02a1c" strokeWidth="1.800" />
            </svg>
            <div className="ml-[14px] w-[64px] text-center text-[12px] leading-[17px]">
                <p>12:01 PM</p>
                <p>17/08/2018</p>
            </div>
            <button aria-label="Desktop" className="ml-[9px] h-[38px] w-[14px] border border-[#7f9ab0]/60 bg-white/15" />
        </div>
    </div>
)

export default function App() {
    return (
        <div className="flex h-screen flex-col overflow-hidden bg-[#cbdcf2] font-['Liberation_Sans',sans-serif] text-[11px] text-black">
            <TitleBar />
            <MenuBars />
            <div className="flex min-h-0 flex-1 gap-[3px] pl-[3px]">
                <div className="flex pt-[3px]">
                    <Sidebar />
                </div>
                <MainArea />
            </div>
            <div className="h-[2px] shrink-0" />
            <StatusBar />
            <TaskBar />
        </div>
    )
}
